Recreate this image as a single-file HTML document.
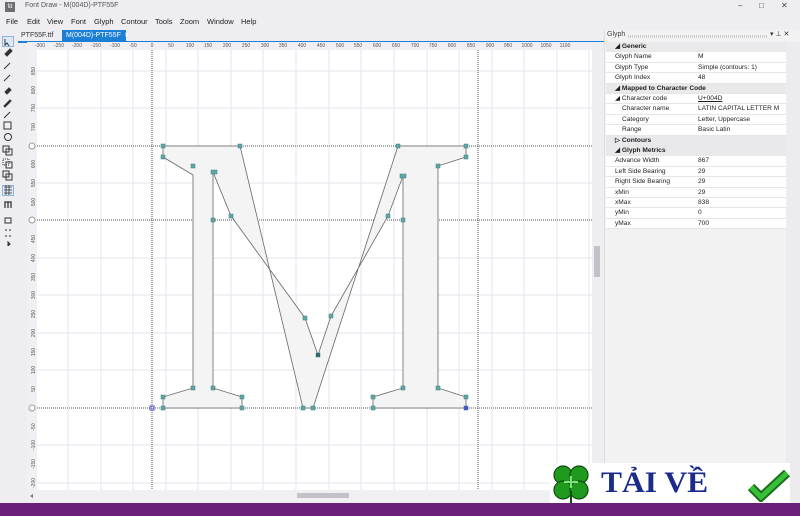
<!DOCTYPE html>
<html><head><meta charset="utf-8"><style>
*{margin:0;padding:0;box-sizing:border-box}
body{width:800px;height:516px;overflow:hidden;background:#eeeef2;font-family:"Liberation Sans",sans-serif;position:relative;color:#1e1e1e}
.abs{position:absolute;white-space:nowrap}
.menu span{position:absolute;top:17px;font-size:7.5px}
.row{position:absolute;left:606px;width:180px;height:10.4px;font-size:6.6px;line-height:10.4px;border-bottom:1px solid #e6e6e6;background:#fff}
.row .l{position:absolute;left:9px}
.row .v{position:absolute;left:92px}
.row.h{background:#e9e9ec;font-weight:bold}
.row.s .l{left:16px}
</style></head><body>
<div class="abs" style="left:5px;top:2px;width:10px;height:10px;background:#6d6d6d;color:#fff;font-size:6px;line-height:10px;text-align:center">fd</div>
<div class="abs" style="left:25px;top:2px;font-size:7px;color:#555">Font Draw - M(004D)-PTF55F</div>
<div class="abs" style="left:738px;top:1px;font-size:8px;color:#444">–</div>
<div class="abs" style="left:759px;top:1px;font-size:8px;color:#444">□</div>
<div class="abs" style="left:781px;top:1px;font-size:8px;color:#444">✕</div>
<div class="menu">
<span style="left:6px">File</span><span style="left:27px">Edit</span><span style="left:47px">View</span><span style="left:71px">Font</span><span style="left:94px">Glyph</span><span style="left:121px">Contour</span><span style="left:155px">Tools</span><span style="left:180px">Zoom</span><span style="left:207px">Window</span><span style="left:241px">Help</span>
</div>
<div class="abs" style="left:21px;top:32px;font-size:7px;color:#333">PTF55F.ttf</div>
<div class="abs" style="left:62px;top:30px;width:64px;height:11px;background:#1c7fd6;color:#fff;font-size:7px;line-height:11px;padding-left:4px">M(004D)-PTF55F&nbsp; <b>×</b></div>
<div class="abs" style="left:18px;top:41px;width:586px;height:1.5px;background:#1c7fd6"></div>
<div class="abs" style="left:2px;top:36px;width:12px;height:11px;border:1px solid #8fb4da;background:#dde9f6"></div>
<div class="abs" style="left:2px;top:185px;width:12px;height:11px;border:1px solid #8fb4da;background:#dde9f6"></div>
<svg class="abs" style="left:0;top:36px" width="16" height="210" stroke="#333" fill="none" stroke-width="1">
<path d="M5 3v6l2-2 2 3"/><path d="M5 18l5-5 2 2-5 5z" fill="#333"/><path d="M4 33l6-6"/><path d="M4 45l6-6"/><path d="M5 56l4-4 2 2-4 4z" fill="#333"/><path d="M4 70l6-6 1 1-6 6z" fill="#333"/><path d="M4 82l6-6"/>
<rect x="4" y="86" width="7" height="7"/><circle cx="8" cy="101" r="3.5"/>
<rect x="3" y="110" width="6" height="6"/><rect x="6" y="113" width="6" height="6"/>
<rect x="3" y="123" width="6" height="6" stroke-dasharray="1 1"/><rect x="6" y="126" width="6" height="6"/>
<rect x="3" y="135" width="6" height="6"/><rect x="6" y="138" width="6" height="6"/>
<path d="M4 151h8M4 154h8M4 157h8M6 149v10M9 149v10" stroke-width=".8"/>
<path d="M5 172v-6h6v6M8 166v6" stroke-width="1.3"/>
<rect x="5" y="182" width="6" height="5"/><path d="M5 194h2M9 194h2M5 200h2M9 200h2"/><path d="M8 206l2 2-2 2z" fill="#333"/>
</svg>
<svg class="abs" style="left:27px;top:42px" width="566" height="460">
<rect x="0" y="0" width="566" height="460" fill="#f0f0f4"/>
<rect x="10" y="8" width="556" height="440" fill="#fff"/>
<g stroke="#e6e6ee" stroke-width="1">
<path d="M41 8v440M74 8v440M106 8v440M139 8v440M171 8v440M204 8v440M236 8v440M269 8v440M302 8v440M334 8v440M367 8v440M400 8v440M432 8v440M465 8v440M497 8v440M530 8v440M562 8v440"/>
<path d="M10 29h556M10 66h556M10 141h556M10 216h556M10 253h556M10 291h556M10 328h556M10 403h556M10 441h556"/>
</g>
<g stroke="#555" stroke-dasharray="1 1" stroke-width="1">
<path d="M10 104h556M10 178h556M10 366h556M125 8v440M451 8v440"/>
</g>
<g font-size="5" fill="#555" text-anchor="middle">
<text x="13" y="5">-300</text><text x="32" y="5">-250</text><text x="50" y="5">-200</text><text x="69" y="5">-150</text><text x="88" y="5">-100</text><text x="106" y="5">-50</text><text x="125" y="5">0</text><text x="144" y="5">50</text><text x="163" y="5">100</text><text x="181" y="5">150</text><text x="200" y="5">200</text><text x="219" y="5">250</text><text x="238" y="5">300</text><text x="256" y="5">350</text><text x="275" y="5">400</text><text x="294" y="5">450</text><text x="313" y="5">500</text><text x="331" y="5">550</text><text x="350" y="5">600</text><text x="369" y="5">650</text><text x="388" y="5">700</text><text x="406" y="5">750</text><text x="425" y="5">800</text><text x="444" y="5">850</text><text x="463" y="5">900</text><text x="481" y="5">950</text><text x="500" y="5">1000</text><text x="519" y="5">1050</text><text x="538" y="5">1100</text>
</g>
<g font-size="5" fill="#555" text-anchor="middle">
<text transform="translate(8,29) rotate(-90)">850</text><text transform="translate(8,48) rotate(-90)">800</text><text transform="translate(8,66) rotate(-90)">750</text><text transform="translate(8,85) rotate(-90)">700</text><text transform="translate(8,122) rotate(-90)">600</text><text transform="translate(8,141) rotate(-90)">550</text><text transform="translate(8,160) rotate(-90)">500</text><text transform="translate(8,197) rotate(-90)">450</text><text transform="translate(8,216) rotate(-90)">400</text><text transform="translate(8,235) rotate(-90)">350</text><text transform="translate(8,253) rotate(-90)">300</text><text transform="translate(8,272) rotate(-90)">250</text><text transform="translate(8,291) rotate(-90)">200</text><text transform="translate(8,310) rotate(-90)">150</text><text transform="translate(8,328) rotate(-90)">100</text><text transform="translate(8,347) rotate(-90)">50</text><text transform="translate(8,385) rotate(-90)">-50</text><text transform="translate(8,403) rotate(-90)">-100</text><text transform="translate(8,422) rotate(-90)">-150</text><text transform="translate(8,441) rotate(-90)">-200</text>
</g>
<g fill="#fff" stroke="#999"><circle cx="5" cy="104" r="3"/><circle cx="5" cy="178" r="3"/><circle cx="5" cy="366" r="3"/></g>
<g transform="translate(-27,-42)">
<path d="M163 146H240L303 408H313L398 146H466V157L438 166V388L466 397V408H373V397L403 388V176L388 216L331 316L318 355L305 318L231 216L213 172V388L242 397V408H163V397L193 388V175L163 157Z" fill="#f4f4f4" stroke="#666" stroke-width=".8"/>
<g fill="#5fa8a6" stroke="#3c7c7a" stroke-width=".5">
<rect x="161" y="144" width="4" height="4"/><rect x="238" y="144" width="4" height="4"/><rect x="396" y="144" width="4" height="4"/><rect x="464" y="144" width="4" height="4"/>
<rect x="161" y="155" width="4" height="4"/><rect x="464" y="155" width="4" height="4"/><rect x="191" y="164" width="4" height="4"/><rect x="436" y="164" width="4" height="4"/>
<rect x="211" y="170" width="6" height="4"/><rect x="400" y="174" width="6" height="4"/><rect x="211" y="218" width="4" height="4"/><rect x="401" y="218" width="4" height="4"/>
<rect x="229" y="214" width="4" height="4"/><rect x="386" y="214" width="4" height="4"/><rect x="303" y="316" width="4" height="4"/><rect x="329" y="314" width="4" height="4"/>
<rect x="316" y="353" width="4" height="4" fill="#2d6b6a"/><rect x="191" y="386" width="4" height="4"/><rect x="211" y="386" width="4" height="4"/><rect x="401" y="386" width="4" height="4"/><rect x="436" y="386" width="4" height="4"/>
<rect x="161" y="395" width="4" height="4"/><rect x="240" y="395" width="4" height="4"/><rect x="371" y="395" width="4" height="4"/><rect x="464" y="395" width="4" height="4"/>
<rect x="161" y="406" width="4" height="4"/><rect x="240" y="406" width="4" height="4"/><rect x="301" y="406" width="4" height="4"/><rect x="311" y="406" width="4" height="4"/><rect x="371" y="406" width="4" height="4"/><rect x="464" y="406" width="4" height="4" fill="#4a4ae0"/>
</g>
<rect x="150" y="406" width="4" height="4" fill="none" stroke="#4a4ae0"/>
</g>
<rect x="10" y="448" width="556" height="12" fill="#f0f0f4"/>
<rect x="270" y="451" width="52" height="5" fill="#c2c2c8"/>
<path d="M6 452l-3 2 3 2z" fill="#777"/>
<rect x="566" y="0" width="10" height="460" fill="#f0f0f4"/>
</svg>
<div class="abs" style="left:592px;top:42px;width:12px;height:460px;background:#eeeef2"></div>
<div class="abs" style="left:594px;top:246px;width:6px;height:31px;background:#c2c2c8"></div>
<div class="abs" style="left:604px;top:30px;width:196px;height:472px;background:#f2f2f2;border-left:1px solid #ddd"></div>
<div class="abs" style="left:607px;top:31px;font-size:7px;color:#444">Glyph</div>
<div class="abs" style="left:628px;top:35px;width:140px;height:3px;background:repeating-linear-gradient(90deg,#ccc 0 1px,transparent 1px 2px)"></div>
<div class="abs" style="left:770px;top:30px;font-size:7px;color:#333">▾ ⊥ ✕</div>
<div class="row h" style="top:42px"><span class="l">◢ Generic</span></div>
<div class="row" style="top:52.4px"><span class="l">Glyph Name</span><span class="v">M</span></div>
<div class="row" style="top:62.8px"><span class="l">Glyph Type</span><span class="v">Simple (contours: 1)</span></div>
<div class="row" style="top:73.2px"><span class="l">Glyph Index</span><span class="v">48</span></div>
<div class="row h" style="top:83.6px"><span class="l">◢ Mapped to Character Code</span></div>
<div class="row" style="top:94px"><span class="l">◢ Character code</span><span class="v" style="text-decoration:underline">U+004D</span></div>
<div class="row s" style="top:104.4px"><span class="l">Character name</span><span class="v">LATIN CAPITAL LETTER M</span></div>
<div class="row s" style="top:114.8px"><span class="l">Category</span><span class="v">Letter, Uppercase</span></div>
<div class="row s" style="top:125.2px"><span class="l">Range</span><span class="v">Basic Latin</span></div>
<div class="row h" style="top:135.6px"><span class="l">▷ Contours</span></div>
<div class="row h" style="top:146px"><span class="l">◢ Glyph Metrics</span></div>
<div class="row" style="top:156.4px"><span class="l">Advance Width</span><span class="v">867</span></div>
<div class="row" style="top:166.8px"><span class="l">Left Side Bearing</span><span class="v">29</span></div>
<div class="row" style="top:177.2px"><span class="l">Right Side Bearing</span><span class="v">29</span></div>
<div class="row" style="top:187.6px"><span class="l">xMin</span><span class="v">29</span></div>
<div class="row" style="top:198px"><span class="l">xMax</span><span class="v">838</span></div>
<div class="row" style="top:208.4px"><span class="l">yMin</span><span class="v">0</span></div>
<div class="row" style="top:218.8px"><span class="l">yMax</span><span class="v">700</span></div>
<div class="abs" style="left:786px;top:42px;width:14px;height:460px;background:#ececee"></div>
<div class="abs" style="left:550px;top:463px;width:240px;height:41px;background:#fff"></div>
<svg class="abs" style="left:550px;top:463px" width="44" height="42">
<g fill="#1f9a1f" stroke="#0c4d0c" stroke-width="1.2"><circle cx="13" cy="12" r="9"/><circle cx="29" cy="12" r="9"/><circle cx="13" cy="27" r="9"/><circle cx="29" cy="27" r="9"/></g>
<path d="M21 13l0 12M14 19h14" stroke="#7fe07f" stroke-width="2"/>
<path d="M21 28v13" stroke="#0c4d0c" stroke-width="2"/>
</svg>
<div class="abs" style="left:601px;top:466px;font-family:'Liberation Serif',serif;font-size:30px;font-weight:bold;color:#1a2b8a;transform:scaleX(1.05);transform-origin:left">TẢI VỀ</div>
<svg class="abs" style="left:748px;top:470px" width="42" height="32"><path d="M3 17l10 10L39 3" stroke="#1a6e1a" stroke-width="9" fill="none"/><path d="M3 17l10 10L39 3" stroke="#37c037" stroke-width="5" fill="none"/></svg>
<div class="abs" style="left:0;top:503px;width:800px;height:13px;background:#6a1f7a"></div>
</body></html>
